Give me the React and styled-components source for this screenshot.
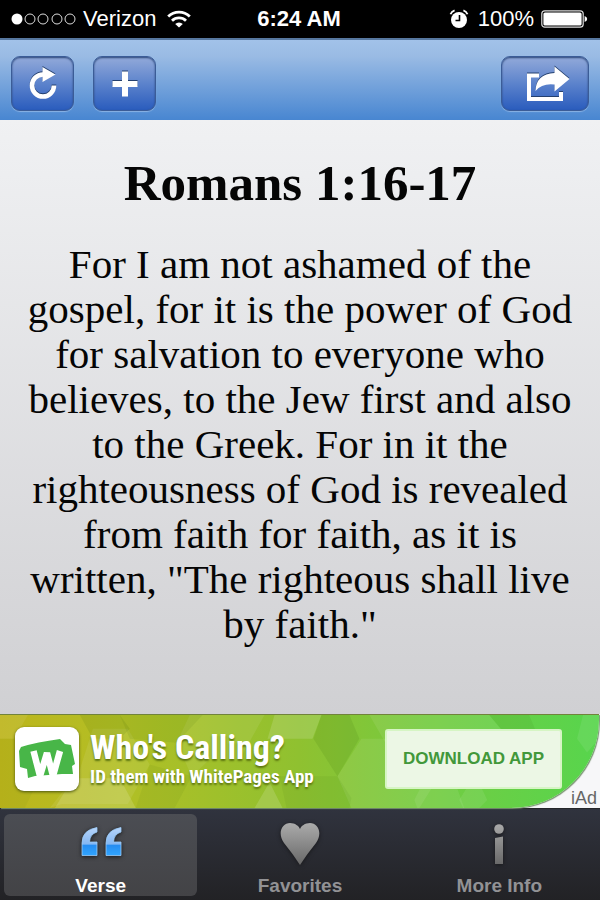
import React from 'react';
import styled, { createGlobalStyle } from 'styled-components';

const tabs = [
	{ name: 'Verse', icon: 'quote', active: true },
	{ name: 'Favorites', icon: 'heart' },
	{ name: 'More Info', icon: 'info' },
];

const App = () => {
	return (
		<Screen>
			<GlobalStyle />
			<StatusBar />
			<Toolbar>
				<ToolButton aria-label='Refresh'>
					<RefreshIcon />
				</ToolButton>
				<ToolButton aria-label='Add'>
					<PlusIcon />
				</ToolButton>
				<ToolButton aria-label='Share' $wide>
					<ShareIcon />
				</ToolButton>
			</Toolbar>
			<Content>
				<StyledH1>Romans 1:16-17</StyledH1>
				<StyledP>
					For I am not ashamed of the gospel, for it is the power of God for
					salvation to everyone who believes, to the Jew first and also to the
					Greek. For in it the righteousness of God is revealed from faith for
					faith, as it is written, "The righteous shall live by faith."
				</StyledP>
			</Content>
			<AdBanner />
			<TabBar>
				{tabs.map(({ name, icon, active }) => (
					<Tab key={name} $active={active}>
						<TabIcon name={icon} />
						{name}
					</Tab>
				))}
			</TabBar>
		</Screen>
	);
};

export default App;

const StatusBar = () => {
	return (
		<StatusWrapper>
			<StatusGroup>
				<svg width='66' height='14' viewBox='0 0 66 14'>
					<circle cx='7' cy='7' r='5.5' fill='#fff' />
					{[20, 33, 47, 60].map((cx) => (
						<circle key={cx} cx={cx} cy='7' r='5' fill='none' stroke='#ddd' />
					))}
				</svg>
				<Carrier>Verizon</Carrier>
				<svg width='24' height='18' viewBox='0 0 24 18' fill='none' stroke='#fff' strokeWidth='2.8'>
					<path d='M1.2 6.6a15.3 15.3 0 0 1 21.6 0' />
					<path d='M5 10.8a10 10 0 0 1 14 0' />
					<path d='M8.2 14a5.4 5.4 0 0 1 7.6 0L12 17.6z' fill='#fff' stroke='none' />
				</svg>
			</StatusGroup>
			<Clock>6:24 AM</Clock>
			<StatusGroup $end>
				<svg width='20' height='20' viewBox='0 0 20 20'>
					<circle cx='10' cy='11' r='8' fill='#fff' />
					<path d='M1.5 5.3Q2.6 2.4 5.6 1.4M18.5 5.3Q17.4 2.4 14.4 1.4' stroke='#fff' strokeWidth='1.8' fill='none' />
					<path d='M10.5 6v5.5H6.5' stroke='#000' strokeWidth='1.6' fill='none' />
				</svg>
				<Percent>100%</Percent>
				<svg width='47' height='20' viewBox='0 0 47 20'>
					<rect x='.8' y='1.8' width='41.4' height='16.4' rx='3' fill='none' stroke='#ddd' strokeWidth='1.2' />
					<rect x='2.4' y='3.4' width='38.2' height='13.2' rx='1.6' fill='#fff' />
					<path d='M43.6 7q2.6 1 2.6 3t-2.6 3z' fill='#fff' />
				</svg>
			</StatusGroup>
		</StatusWrapper>
	);
};

const RefreshIcon = () => (
	<ButtonSvg width='32' height='34' viewBox='0 0 32 34'>
		<path d='M27 18.500A11 11 0 1 1 16 7.500' fill='none' stroke='#fff' strokeWidth='4.6' />
		<path d='M15.500 0L28.500 7.500L15.500 15z' fill='#fff' />
	</ButtonSvg>
);

const PlusIcon = () => (
	<ButtonSvg width='26' height='26' viewBox='0 0 26 26'>
		<path d='M13 .5v25M.5 13h25' stroke='#fff' strokeWidth='6' />
	</ButtonSvg>
);

const ShareIcon = () => (
	<ButtonSvg width='50' height='36' viewBox='-6 0 50 36'>
		<path d='M13 9.500H3V33H35V26' fill='none' stroke='#fff' strokeWidth='4' />
		<path d='M28.500 0.500L43.500 13L28.500 25.500V18.500Q16 17 9.500 25Q10 8 28.500 7z' fill='#fff' />
	</ButtonSvg>
);

const AdBanner = () => {
	return (
		<Ad>
			<AdPanel>
				<AdPattern />
				<AdLogo>
					<svg width='56' height='40' viewBox='0 0 56 40'>
						<path d='M0 12L2 8Q18 3 41 0L46 5L52 6L56 25L53 27L54 35H43L16 37L9 39L8 30L1 28z' fill='#48b648' />
						<path d='M14.500 12L21 37L28 14L34 37L41 12' fill='none' stroke='#fff' strokeWidth='6.5' strokeLinejoin='bevel' />
					</svg>
				</AdLogo>
				<AdText>
					<AdTitle>Who's Calling?</AdTitle>
					<AdSubtitle>ID them with WhitePages App</AdSubtitle>
				</AdText>
				<DownloadButton>DOWNLOAD APP</DownloadButton>
			</AdPanel>
			<AdLabel>iAd</AdLabel>
		</Ad>
	);
};

const AdPattern = () => (
	<PatternSvg viewBox='0 0 600 94' preserveAspectRatio='none'>
		<g fill='#fff' fillOpacity='.08'>
			<path d='M0 0H28L14 24H0zM93 14H128L150 50L128 90H62L50 94L80 55z' />
			<path d='M190 0H265L240 45H210L192 62L177 28z' />
			<path d='M275 0H322L313 24H268z' fillOpacity='.14' />
			<path d='M338 62L362 24H410L440 62L420 94H352z' />
			<path d='M370 0H490L510 24L480 70H410zM460 86L468 73H482L488 86L480 94H464z' />
			<path d='M415 86L421 74H458L465 94H418zM584 0H600V24L588 38L578 24z' />
			<path d='M55 94L73 64H120L136 94zM255 94L270 68L283 94z' fillOpacity='.14' />
		</g>
		<g fill='#265c00' fillOpacity='.1'>
			<path d='M80 0H120L130 14L120 24H93zM322 0H350L360 24L338 62L314 24z' />
			<path d='M120 0H203L177 28L130 24zM490 0H530L540 24H510z' fillOpacity='.08' />
			<path d='M280 62H338L352 84L350 94H287zM150 50L192 62L175 94H136z' fillOpacity='.06' />
			<path d='M0 24H14L40 62L25 94H0z' fillOpacity='.05' />
		</g>
	</PatternSvg>
);

const TabIcon = ({ name }) => {
	if (name === 'quote') {
		return (
			<TabSvg viewBox='0 0 44 48'>
				<defs>
					<linearGradient id='quoteFill' x2='0' y2='1'>
						<stop offset='0' stopColor='#b7d4fa' />
						<stop offset='.6' stopColor='#83b7f3' />
						<stop offset='.62' stopColor='#258cf0' />
						<stop offset='1' stopColor='#31a5ff' />
					</linearGradient>
				</defs>
				<g fill='url(#quoteFill)' stroke='#9ccbf8' strokeWidth='.8'>
					<path d='M18 7.500V12Q11 14 10.500 22H18V35.500H3V23Q3 10 18 7.500z' />
					<path d='M42 7.500V12Q35 14 34.500 22H42V35.500H27V23Q27 10 42 7.500z' />
				</g>
			</TabSvg>
		);
	}
	return (
		<TabSvg viewBox='0 0 44 48'>
			<defs>
				<linearGradient id='grayFill' gradientUnits='userSpaceOnUse' x1='0' y1='3' x2='0' y2='46'>
					<stop offset='0' stopColor='#ababab' />
					<stop offset='1' stopColor='#666' />
				</linearGradient>
			</defs>
			{name === 'heart' ? (
				<path d='M22 45Q15 34 6 23C-1 13 4 3 12 3C17 3 21 6 22 9C23 6 27 3 32 3C40 3 45 13 38 23Q29 34 22 45z' fill='url(#grayFill)' />
			) : (
				<g fill='url(#grayFill)'>
					<circle cx='22' cy='9' r='4.800' />
					<path d='M18 18L26 16.500V44H18z' />
				</g>
			)}
		</TabSvg>
	);
};

const GlobalStyle = createGlobalStyle`
	* {
		box-sizing: border-box;
	}

	body {
		margin: 0;
		font-family: 'Liberation Sans', Arial, sans-serif;
	}
`;

const Screen = styled.div`
	display: flex;
	flex-direction: column;
	min-height: 100vh;
`;

const StatusWrapper = styled.header`
	display: grid;
	grid-template-columns: 1fr auto 1fr;
	align-items: center;
	height: 38px;
	padding: 0 12px 0 10px;
	background-color: #000;
	color: #fff;
	font-size: 22px;
`;

const StatusGroup = styled.div`
	display: flex;
	align-items: center;
	justify-content: ${({ $end }) => ($end ? 'flex-end' : 'flex-start')};
	gap: 7px;
`;

const Carrier = styled.span`
	padding-right: 4px;
`;

const Clock = styled.span`
	font-weight: bold;
`;

const Percent = styled.span`
	padding-left: 2px;
`;

const Toolbar = styled.nav`
	display: flex;
	gap: 19px;
	padding: 16px 11px 9px;
	border-top: 2px solid #56779f;
	background: linear-gradient(#a2c2e9, #9abbe4 20%, #4886d1);
`;

const ToolButton = styled.button`
	display: flex;
	align-items: center;
	justify-content: center;
	width: ${({ $wide }) => ($wide ? '88px' : '63px')};
	height: 55px;
	margin-left: ${({ $wide }) => ($wide ? 'auto' : '0')};
	padding: 0;
	border: 1px solid #3b5c97;
	border-radius: 9px;
	background: linear-gradient(#92a9d9, #5c83cc 50%, #2a5cbd);
	box-shadow: inset 0 1px 2px #294576, 0 1px 1px #8ab2e4;
`;

const ButtonSvg = styled.svg`
	filter: drop-shadow(0 -1px 0 #24406f);
`;

const Content = styled.main`
	flex: 1;
	padding: 36px 24px;
	background: linear-gradient(#f0f1f3, #d0d0d3);
	color: #050505;
	font-family: Georgia, 'Liberation Serif', serif;
	text-align: center;
`;

const StyledH1 = styled.h1`
	margin: 0 0 32px;
	font-size: 51px;
	line-height: 54px;
`;

const StyledP = styled.p`
	margin: 0;
	font-size: 41px;
	line-height: 45px;
`;

const Ad = styled.aside`
	position: relative;
	background-color: #f7f7f9;
`;

const AdPanel = styled.div`
	position: relative;
	display: flex;
	align-items: center;
	gap: 11px;
	height: 94px;
	margin-right: 1px;
	padding: 0 37px 5px 15px;
	overflow: hidden;
	border-top: 1px solid #71833b;
	border-bottom-right-radius: 88px;
	box-shadow: 1px 1px 1px #76926e;
	background: linear-gradient(90deg, #bdb51c, #b2bf25 20%, #8fc130 50%, #70cd43 75%, #57d54d);
`;

const PatternSvg = styled.svg`
	position: absolute;
	inset: 0;
	width: 100%;
	height: 100%;
`;

const AdLogo = styled.div`
	position: relative;
	display: flex;
	align-items: center;
	justify-content: center;
	width: 64px;
	height: 64px;
	border-radius: 9px;
	background-color: #fff;
	box-shadow: 0 1px 3px #4a5410;
`;

const AdText = styled.div`
	position: relative;
	color: #fff;
	font-family: 'Roboto Condensed', Roboto, sans-serif;
	font-weight: bold;
	white-space: nowrap;
	text-shadow: 0 2px 2px #5d7510;
`;

const AdTitle = styled.div`
	font-size: 34px;
	line-height: 36px;
`;

const AdSubtitle = styled.div`
	font-size: 19px;
	line-height: 24px;
`;

const DownloadButton = styled.button`
	position: relative;
	width: 177px;
	height: 60px;
	margin-left: auto;
	padding: 0;
	border: 2px solid #d6f5c4;
	border-radius: 3px;
	background-color: #ecf7e5;
	color: #42983a;
	font-family: inherit;
	font-size: 17px;
	font-weight: bold;
	white-space: nowrap;
`;

const AdLabel = styled.span`
	position: absolute;
	right: 3px;
	bottom: 0;
	color: #666;
	font-size: 18px;
	line-height: 20px;
`;

const TabBar = styled.nav`
	display: grid;
	grid-template-columns: repeat(3, 1fr);
	gap: 6px;
	padding: 5px 4px 4px;
	border-top: 1px solid #25262a;
	background: linear-gradient(#30333e, #222225);
`;

const Tab = styled.button`
	display: flex;
	flex-direction: column;
	align-items: center;
	height: 82px;
	padding: 6px 0 0;
	border: 0;
	border-radius: 6px;
	background: ${({ $active }) => ($active ? 'linear-gradient(#4b4d53, #434346)' : 'none')};
	color: ${({ $active }) => ($active ? '#fff' : '#929295')};
	font-family: inherit;
	font-size: 19px;
	font-weight: bold;
	line-height: 20px;
`;

const TabSvg = styled.svg`
	width: 44px;
	height: 48px;
	margin-bottom: 8px;
	filter: drop-shadow(0 1px 2px #18181b);
`;
